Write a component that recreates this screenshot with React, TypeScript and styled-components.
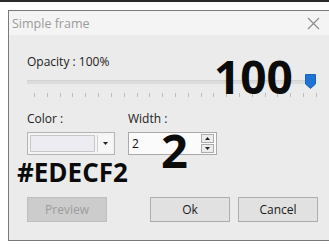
import React from 'react'
import styled, { createGlobalStyle } from 'styled-components'

const GlobalStyle = createGlobalStyle`
  html, body {
    margin: 0;
    padding: 0;
    background: #ffffff;
    overflow: hidden;
  }
  body {
    width: 329px;
    height: 249px;
    border-top: 2px solid #2b2b2b;
    box-sizing: border-box;
    font-family: 'Open Sans', 'Noto Sans', sans-serif;
  }
`

const Page = styled.div`
  width: 329px;
  overflow: hidden;
  padding: 8px 0 0 8px;
  box-sizing: border-box;
`

const Window = styled.div`
  width: 340px;
  height: 231px;
  box-sizing: border-box;
  border: 1px solid #7a7a7a;
  border-right: none;
  background: #ebebeb;
  display: flex;
  flex-direction: column;
`

const TitleBar = styled.div`
  height: 24px;
  flex: none;
  background: #f4f4f4;
  display: flex;
  align-items: center;
  padding: 0 0 0 3px;
  color: #9b9b9b;
  font-size: 12.5px;
`

const Title = styled.span`
  flex: 1;
`

const CloseBox = styled.div`
  width: 30px;
  display: flex;
  justify-content: flex-start;
  padding-left: 4px;
  margin-right: 11px;
`

const Body = styled.div`
  flex: 1;
  display: flex;
  flex-direction: column;
  padding: 19px 0 0 18px;
`

const Label = styled.div`
  font-size: 12px;
  color: #222;
  line-height: 16px;
`

const SliderRow = styled.div`
  position: relative;
  width: 292px;
  margin-top: 6px;
  height: 28px;
`

const Track = styled.div`
  position: absolute;
  left: 0;
  right: 8px;
  top: 4px;
  height: 4px;
  background: #dcdcdc;
  border-top: 1px solid #d2d2d2;
  box-sizing: border-box;
`

const Thumb = styled.svg`
  position: absolute;
  right: 3px;
  top: -2px;
`

const Ticks = styled.div`
  position: absolute;
  left: 7px;
  right: 2px;
  top: 17px;
  height: 4px;
  display: flex;
  justify-content: space-between;
`

const Tick = styled.span`
  width: 1px;
  height: 4px;
  background: #bdbdbd;
`

// big annotation numbers drawn over the controls
const BigNumber = styled.div<{ size: number }>`
  position: absolute;
  font-family: 'Open Sans', sans-serif;
  font-weight: 700;
  font-size: ${p => p.size}px;
  line-height: 0.72;
  color: #0b0b0b;
  pointer-events: none;
`

const FieldsRow = styled.div`
  display: flex;
  gap: 13px;
  margin-top: 7px;
`

const Field = styled.div<{ width: number }>`
  position: relative;
  width: ${p => p.width}px;
  display: flex;
  flex-direction: column;
  gap: 5px;
`

const Combo = styled.div`
  width: 88px;
  height: 23px;
  box-sizing: border-box;
  border: 1px solid #b4b4b4;
  background: #f4f4f4;
  display: flex;
  padding: 2px;
`

const Swatch = styled.div<{ color: string }>`
  flex: 1;
  background: ${p => p.color};
  border: 1px solid #c8c8c8;
`

const DropButton = styled.div`
  width: 14px;
  display: flex;
  align-items: center;
  justify-content: center;
  margin-left: 2px;
  border-left: 1px solid #d0d0d0;
  background: #f7f7f7;
`

const SpinBox = styled.div`
  width: 89px;
  height: 23px;
  box-sizing: border-box;
  border: 1px solid #a9a9a9;
  background: #fbfbfb;
  display: flex;
  align-items: center;
  padding: 0 1px 0 3px;
  font-size: 12px;
  color: #111;
`

const SpinValue = styled.span`
  flex: 1;
`

const SpinButtons = styled.div`
  display: flex;
  flex-direction: column;
  gap: 1px;
  margin-right: 1px;
`

const SpinButton = styled.div`
  width: 13px;
  height: 9px;
  box-sizing: border-box;
  border: 1px solid #adadad;
  background: #ececec;
  display: flex;
  align-items: center;
  justify-content: center;
`

const ColorCode = styled.div`
  font-family: 'Open Sans', sans-serif;
  font-weight: 700;
  font-size: 26px;
  line-height: 1;
  color: #0b0b0b;
  margin: -1px 0 0 -10px;
  white-space: nowrap;
`

const ButtonRow = styled.div`
  display: flex;
  margin-top: 12px;
  width: 291px;
`

const Button = styled.div<{ disabled?: boolean }>`
  width: 80px;
  height: 25px;
  box-sizing: border-box;
  border: 1px solid ${p => (p.disabled ? '#bfbfbf' : '#adadad')};
  background: ${p => (p.disabled ? '#cccccc' : '#e1e1e1')};
  color: ${p => (p.disabled ? '#9c9c9c' : '#1a1a1a')};
  font-size: 12px;
  display: flex;
  align-items: center;
  justify-content: center;
`

const Spacer = styled.div<{ w: number }>`
  width: ${p => p.w}px;
`

export default function App() {
  const ticks = Array.from({ length: 23 }, (_, i) => i)

  return (
    <Page>
      <GlobalStyle />
      <Window>
        <TitleBar>
          <Title>Simple frame</Title>
          <CloseBox>
            <svg width="13" height="13" viewBox="0 0 13 13">
              <path d="M1 1 L12 12 M12 1 L1 12" stroke="#8a8a8a" strokeWidth="1.1" />
            </svg>
          </CloseBox>
        </TitleBar>
        <Body>
          <Label>Opacity : 100%</Label>
          <SliderRow>
            <Track />
            <Ticks>
              {ticks.map(i => (
                <Tick key={i} />
              ))}
            </Ticks>
            <Thumb width="11" height="15" viewBox="0 0 11 15">
              <path d="M0.5 0.5 H10.5 V10 L5.5 14.5 L0.5 10 Z" fill="#1f74d3" stroke="#1a63b8" strokeWidth="1" />
            </Thumb>
            <BigNumber size={46} style={{ left: 187, top: -16 }}>100</BigNumber>
          </SliderRow>
          <FieldsRow>
            <Field width={88}>
              <Label>Color :</Label>
              <Combo>
                <Swatch color="#edecf2" />
                <DropButton>
                  <svg width="5" height="3" viewBox="0 0 5 3">
                    <path d="M0 0 H5 L2.5 3 Z" fill="#222" />
                  </svg>
                </DropButton>
              </Combo>
              <ColorCode>#EDECF2</ColorCode>
            </Field>
            <Field width={89}>
              <Label>Width :</Label>
              <SpinBox>
                <SpinValue>2</SpinValue>
                <SpinButtons>
                  <SpinButton>
                    <svg width="5" height="3" viewBox="0 0 5 3">
                      <path d="M0 3 H5 L2.5 0 Z" fill="#222" />
                    </svg>
                  </SpinButton>
                  <SpinButton>
                    <svg width="5" height="3" viewBox="0 0 5 3">
                      <path d="M0 0 H5 L2.5 3 Z" fill="#222" />
                    </svg>
                  </SpinButton>
                </SpinButtons>
              </SpinBox>
              <BigNumber size={47} style={{ left: 33, top: 23 }}>2</BigNumber>
            </Field>
          </FieldsRow>
          <ButtonRow>
            <Button disabled>Preview</Button>
            <Spacer w={43} />
            <Button>Ok</Button>
            <Spacer w={8} />
            <Button>Cancel</Button>
          </ButtonRow>
        </Body>
      </Window>
    </Page>
  )
}
